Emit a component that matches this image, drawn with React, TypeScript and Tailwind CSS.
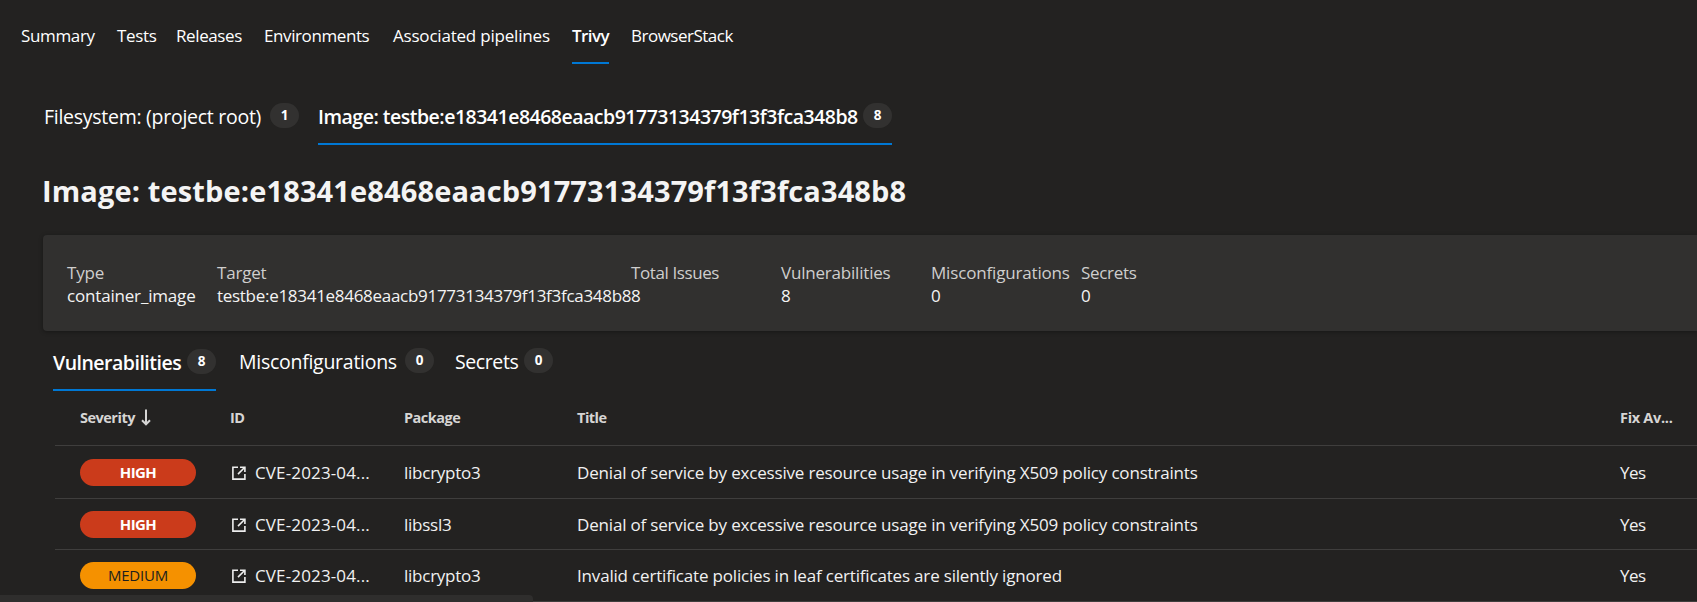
import React from "react";

const navItems = [
  { label: "Summary", cls: "w-[96px] tracking-[-0.35px]" },
  { label: "Tests", cls: "w-[59px] tracking-[-0.3px]" },
  { label: "Releases", cls: "w-[88px] tracking-[-0.4px]" },
  { label: "Environments", cls: "w-[129px] tracking-[-0.4px]" },
  { label: "Associated pipelines", cls: "w-[179px] tracking-[-0.2px]" },
];

const details = [
  { label: "Type", value: "container_image", cls: "w-[150px]", l: "tracking-[-0.2px]", v: "tracking-[-0.18px]" },
  { label: "Target", value: "testbe:e18341e8468eaacb91773134379f13f3fca348b8", cls: "w-[414px]", l: "tracking-[-0.2px]", v: "tracking-[-0.29px]" },
  { label: "Total Issues", value: "8", cls: "w-[150px]", l: "tracking-[-0.4px]", v: "" },
  { label: "Vulnerabilities", value: "8", cls: "w-[150px]", l: "tracking-[-0.2px]", v: "" },
  { label: "Misconfigurations", value: "0", cls: "w-[150px]", l: "tracking-[-0.17px]", v: "" },
  { label: "Secrets", value: "0", cls: "w-[150px]", l: "tracking-[-0.3px]", v: "" },
];

const x509 = "Denial of service by excessive resource usage in verifying X509 policy constraints";

const rows = [
  { severity: "HIGH", pkg: "libcrypto3", title: x509, cls: "h-[53px]" },
  { severity: "HIGH", pkg: "libssl3", title: x509, cls: "h-[51px]" },
  {
    severity: "MEDIUM",
    pkg: "libcrypto3",
    title: "Invalid certificate policies in leaf certificates are silently ignored",
    cls: "h-[52px]",
  },
];

const columns = "grid grid-cols-[150px_174px_173px_1043px_77px] pl-[25px]";

function Badge({ n, className = "" }: { n: number; className?: string }) {
  return (
    <span
      className={`flex h-[25px] w-[29px] shrink-0 items-center justify-center rounded-full bg-[#323130] text-[13.5px] font-bold leading-none ${className}`}
    >
      {n}
    </span>
  );
}

function ExternalLink() {
  return (
    <svg width="14" height="14" viewBox="0 0 14 14" fill="none" stroke="#eeeeee" strokeWidth="1.6">
      <path d="M6 1.2H0.9V13.1H12.9V8" />
      <path d="M8 1.2H12.9V6" />
      <path d="M12.6 1.5L6 8.1" />
    </svg>
  );
}

function SortArrow() {
  return (
    <svg className="mt-px" width="10" height="17" viewBox="0 0 10 17" fill="none" stroke="#d6d5d4" strokeWidth="2">
      <path d="M5 0.5V15" />
      <path d="M1 11.3L5 15.3L9 11.3" />
    </svg>
  );
}

export default function App() {
  return (
    <div className="relative h-[602px] w-[1697px] overflow-hidden whitespace-nowrap bg-[#232221] font-['Open_Sans',sans-serif] text-[17px] leading-6 text-white">
      <nav className="flex h-16 pl-[21px]">
        {navItems.map((item) => (
          <div key={item.label} className={`shrink-0 pt-6 ${item.cls}`}>
            {item.label}
          </div>
        ))}
        <div className="w-[37px] shrink-0 border-b-2 border-[#0078d4] pt-6 font-semibold tracking-[-0.55px]">
          Trivy
        </div>
        <div className="ml-[22px] pt-6 tracking-[-0.5px]">BrowserStack</div>
      </nav>

      <div className="mt-[38px] flex h-[43px] pl-[43px] text-[19.5px] leading-7">
        <div className="flex w-[275px] shrink-0">
          <span className="w-[227px] pl-px pt-px tracking-[-0.27px]">Filesystem: (project root)</span>
          <Badge n={1} className="mt-px" />
        </div>
        <div className="flex w-[574px] shrink-0 border-b-2 border-[#0078d4]">
          <span className="w-[545px] pt-px font-semibold tracking-[-0.5px]">
            Image: testbe:e18341e8468eaacb91773134379f13f3fca348b8
          </span>
          <Badge n={8} className="mt-px" />
        </div>
      </div>

      <h1 className="mt-[26px] pl-[42px] text-[29px] font-bold leading-10 tracking-[0.13px] text-[#f4f4f4]">
        Image: testbe:e18341e8468eaacb91773134379f13f3fca348b8
      </h1>

      <section className="ml-[43px] mt-6 flex h-[96px] rounded-l-[4px] bg-[#31302f] pl-6 pt-[26px] leading-[23px] shadow-[0_1px_4px_rgba(0,0,0,0.35)]">
        {details.map((d) => (
          <div key={d.label} className={`shrink-0 ${d.cls}`}>
            <div className={`text-[#cfcecd] ${d.l}`}>{d.label}</div>
            <div className={`text-[#f4f4f4] ${d.v}`}>{d.value}</div>
          </div>
        ))}
      </section>

      <div className="mt-4 flex h-11 pl-[53px] text-[19.5px] leading-7">
        <div className="flex w-[163px] shrink-0 border-b-2 border-[#0078d4] pt-px">
          <span className="w-[134px] pt-px font-semibold tracking-[-0.5px]">Vulnerabilities</span>
          <Badge n={8} className="mt-px" />
        </div>
        <div className="ml-[23px] flex w-[216px] shrink-0">
          <span className="w-[166px] pt-px tracking-[-0.27px]">Misconfigurations</span>
          <Badge n={0} className="mt-px" />
        </div>
        <div className="flex">
          <span className="w-[69px] pt-px tracking-[-0.4px]">Secrets</span>
          <Badge n={0} className="mt-px" />
        </div>
      </div>

      <div className="ml-[55px]">
        <div
          className={`h-[55px] border-b border-[#3f3e3d] pt-[17px] text-[14.5px] font-bold leading-5 tracking-[-0.5px] text-[#d6d5d4] ${columns}`}
        >
          <div className="flex">
            <span className="w-[61px]">Severity</span>
            <SortArrow />
          </div>
          <div>ID</div>
          <div>Package</div>
          <div>Title</div>
          <div className="tracking-[-0.3px]">Fix Av...</div>
        </div>
        {rows.map((r, i) => (
          <div key={i} className={`items-center border-b border-[#3f3e3d] text-[#f1f1f1] ${columns} ${r.cls}`}>
            <div
              className={`flex h-[27px] w-[116px] items-center justify-center rounded-full text-[15px] leading-none ${
                r.severity === "HIGH"
                  ? "bg-[#cb3b1b] font-bold tracking-[-0.6px] text-white"
                  : "bg-[#f59100] tracking-[-0.22px] text-[#201f1e]"
              }`}
            >
              {r.severity}
            </div>
            <div className="flex items-center gap-[9px] pl-[2px] pt-px tracking-[0.14px]">
              <ExternalLink />
              CVE-2023-04...
            </div>
            <div className="pt-px tracking-[-0.25px]">{r.pkg}</div>
            <div className="pt-px tracking-[-0.18px]">{r.title}</div>
            <div className="pt-px tracking-[-0.5px]">Yes</div>
          </div>
        ))}
      </div>

      <div className="absolute bottom-0 left-0 h-[7px] w-[533px] rounded-tr-[4px] bg-[#2f2e2d]" />
    </div>
  );
}
